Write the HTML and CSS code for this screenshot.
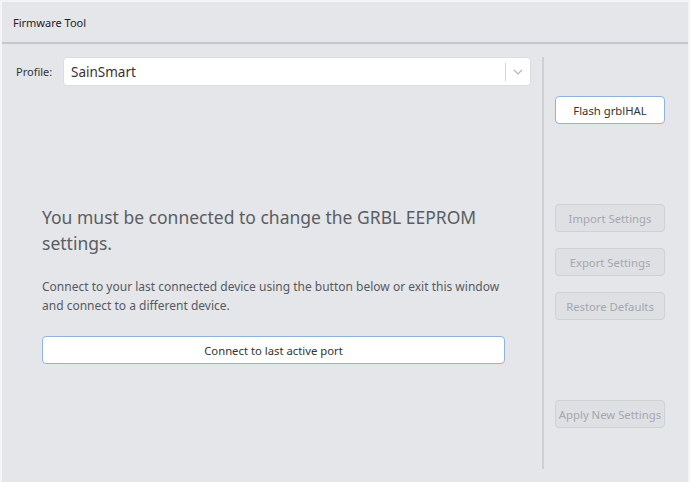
FILE: index.html
```html
<!DOCTYPE html>
<html>
<head>
<meta charset="utf-8">
<link rel="stylesheet" href="styles.css">
</head>
<body>
<div class="app">
  <div class="header">Firmware Tool</div>
  <div class="body">
    <div class="left">
      <div class="profile-row">
        <span class="profile-label">Profile:</span>
        <div class="select">
          <span class="select-value">SainSmart</span>
          <span class="select-sep"></span>
          <span class="select-arrow">
            <svg width="10" height="6" viewBox="0 0 10 6"><path d="M1 1 L5 5 L9 1" fill="none" stroke="#b3b6bc" stroke-width="1.2"/></svg>
          </span>
        </div>
      </div>
      <div class="message">
        <div class="title">You must be connected to change the GRBL EEPROM settings.</div>
        <div class="para">Connect to your last connected device using the button below or exit this window and connect to a different device.</div>
        <button class="btn primary wide">Connect to last active port</button>
      </div>
    </div>
    <div class="divider"></div>
    <div class="right">
      <button class="btn primary flash">Flash grblHAL</button>
      <button class="btn disabled import">Import Settings</button>
      <button class="btn disabled next">Export Settings</button>
      <button class="btn disabled next">Restore Defaults</button>
      <button class="btn disabled apply">Apply New Settings</button>
    </div>
  </div>
</div>
</body>
</html>
```
FILE: styles.css
```css
* { box-sizing: border-box; }
html, body { margin: 0; padding: 0; }
body {
  width: 690px;
  height: 482px;
  font-family: "Noto Sans", "Open Sans", sans-serif;
  background: #f4f4f6;
  overflow: hidden;
}
.app {
  margin: 2px 2px 0 2px;
  height: 480px;
  background: #e5e6ea;
  display: flex;
  flex-direction: column;
}
.header {
  height: 42px;
  padding-left: 11px;
  display: flex;
  align-items: center;
  font-size: 11px;
  color: #222;
  border-bottom: 2px solid #c4c6cb;
  flex: none;
}
.body {
  flex: 1;
  display: flex;
  padding: 13px 0 13px 14px;
}
.left {
  width: 515px;
  display: flex;
  flex-direction: column;
}
.profile-row {
  display: flex;
  align-items: center;
  height: 29px;
}
.profile-label {
  font-size: 11px;
  color: #333;
  width: 47px;
}
.select {
  flex: 1;
  height: 29px;
  background: #fff;
  border: 1px solid #dadde2;
  border-radius: 4px;
  display: flex;
  align-items: center;
  padding-left: 7px;
}
.select-value {
  flex: 1;
  font-size: 13.5px;
  color: #333;
}
.select-sep {
  width: 1px;
  height: 18px;
  background: #cfd2d6;
}
.select-arrow {
  width: 24px;
  display: flex;
  justify-content: center;
  align-items: center;
}
.message {
  padding: 0 26px;
  margin-top: 118px;
}
.title {
  font-size: 17.5px;
  line-height: 26px;
  color: #5a5d63;
}
.para {
  margin-top: 21px;
  font-size: 12px;
  line-height: 19px;
  color: #575a61;
}
.btn {
  display: block;
  font-family: "Noto Sans", "Open Sans", sans-serif;
  font-size: 11.3px;
  height: 28px;
  border-radius: 4px;
  padding: 0;
  text-align: center;
  white-space: nowrap;
}
.primary {
  background: #fff;
  border: 1px solid #8fb3dd;
  color: #333;
}
.wide {
  width: 100%;
  margin-top: 21px;
}
.divider {
  width: 2px;
  background: #cdcfd4;
  margin-left: 11px;
}
.right {
  width: 110px;
  margin-left: 11px;
  display: flex;
  flex-direction: column;
}
.right .btn { width: 110px; }
.disabled {
  background: #dfe0e4;
  border: 1px solid #cdd0d5;
  color: #a4a7ae;
}
.flash { margin-top: 39px; }
.import { margin-top: 80px; }
.next { margin-top: 16px; }
.apply { margin-top: 80px; }
```
